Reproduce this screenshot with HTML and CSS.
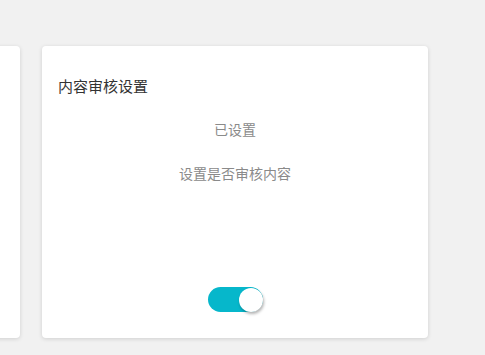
FILE: index.html
```html
<!DOCTYPE html>
<html lang="zh-CN">
<head>
    <meta charset="UTF-8">
    <meta name="viewport" content="width=device-width, initial-scale=1.0">
    <title>内容审核设置</title>
    <link rel="stylesheet" href="styles.css">
</head>
<body>

    <div class="cards">
        <!-- previous card, mostly scrolled off -->
        <div class="card"></div>

        <div class="card">
            <h3 class="card-title">内容审核设置</h3>
            <div class="card-body">
                <div class="status">已设置</div>
                <div class="desc">设置是否审核内容</div>
            </div>
            <div class="card-foot">
                <label class="switch on">
                    <span class="knob"></span>
                </label>
            </div>
        </div>
    </div>

</body>
</html>
```

FILE: styles.css
```css
body {
    margin: 0;
    background: #f1f1f1;
    font-family: "Noto Sans CJK SC", "Noto Sans", sans-serif;
    height: 355px;
    overflow: hidden;
}
.cards {
    display: flex;
    gap: 22px;
    padding-top: 46px;
    margin-left: -366px;
}
.card {
    flex: none;
    width: 386px;
    height: 292px;
    box-sizing: border-box;
    background: #fff;
    border-radius: 4px;
    box-shadow: 0 1px 4px rgba(0, 0, 0, 0.14);
    display: flex;
    flex-direction: column;
    padding: 30px 16px 26px;
}
.card-title {
    margin: 0;
    font-size: 15px;
    font-weight: normal;
    line-height: 20px;
    color: #333;
}
.card-body {
    flex: 1;
    text-align: center;
    color: #8a8a8a;
    font-size: 14px;
    line-height: 20px;
}
.status {
    margin-top: 23px;
}
.desc {
    margin-top: 24px;
}
.card-foot {
    display: flex;
    justify-content: center;
}
.switch {
    width: 55px;
    height: 25px;
    border-radius: 13px;
    background: #d0d0d0;
    display: flex;
    align-items: center;
    cursor: pointer;
}
.switch.on {
    background: #06b7cb;
    justify-content: flex-end;
}
.knob {
    width: 24px;
    height: 24px;
    border-radius: 50%;
    background: #fff;
    box-shadow: 1px 2px 3px rgba(0, 0, 0, 0.3);
}
```
